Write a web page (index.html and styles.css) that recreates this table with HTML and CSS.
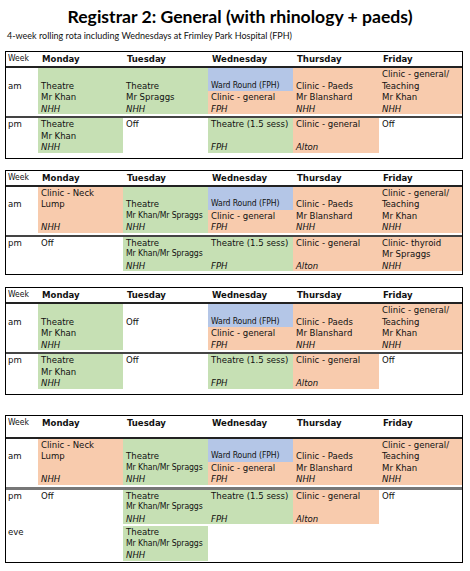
FILE: index.html
```html
<!DOCTYPE html>
<html>
<head>
<meta charset="utf-8">
<link rel="stylesheet" href="styles.css">
</head>
<body>
<h1 class="title">Registrar 2: General (with rhinology + paeds)</h1>
<p class="sub">4-week rolling rota including Wednesdays at Frimley Park Hospital (FPH)</p>

<div class="week w1">
  <div class="row head">
    <div class="c wk">Week</div><div class="c">Monday</div><div class="c">Tuesday</div><div class="c">Wednesday</div><div class="c">Thursday</div><div class="c">Friday</div>
  </div>
  <div class="row am">
    <div class="c"><div class="l"></div><div class="l">am</div></div>
    <div class="c g"><div class="l"></div><div class="l">Theatre</div><div class="l">Mr Khan</div><div class="l i">NHH</div></div>
    <div class="c g"><div class="l"></div><div class="l">Theatre</div><div class="l">Mr Spraggs</div><div class="l i">NHH</div></div>
    <div class="c split"><div class="b"><div class="l"></div><div class="l s">Ward Round (FPH)</div></div><div class="o"><div class="l">Clinic - general</div><div class="l i">FPH</div></div></div>
    <div class="c o"><div class="l"></div><div class="l">Clinic - Paeds</div><div class="l">Mr Blanshard</div><div class="l i">NHH</div></div>
    <div class="c o"><div class="l">Clinic - general/</div><div class="l">Teaching</div><div class="l">Mr Khan</div><div class="l i">NHH</div></div>
  </div>
  <div class="row pm">
    <div class="c"><div class="l">pm</div></div>
    <div class="c g"><div class="l">Theatre</div><div class="l">Mr Khan</div><div class="l i">NHH</div></div>
    <div class="c"><div class="l">Off</div></div>
    <div class="c g"><div class="l">Theatre (1.5 sess)</div><div class="l"></div><div class="l i">FPH</div></div>
    <div class="c o"><div class="l">Clinic - general</div><div class="l"></div><div class="l i">Alton</div></div>
    <div class="c"><div class="l">Off</div></div>
  </div>
</div>

<div class="week w2">
  <div class="row head">
    <div class="c wk">Week</div><div class="c">Monday</div><div class="c">Tuesday</div><div class="c">Wednesday</div><div class="c">Thursday</div><div class="c">Friday</div>
  </div>
  <div class="row am">
    <div class="c"><div class="l"></div><div class="l">am</div></div>
    <div class="c o"><div class="l">Clinic - Neck</div><div class="l">Lump</div><div class="l"></div><div class="l i">NHH</div></div>
    <div class="c g"><div class="l"></div><div class="l">Theatre</div><div class="l s">Mr Khan/Mr Spraggs</div><div class="l i">NHH</div></div>
    <div class="c split"><div class="b"><div class="l"></div><div class="l s">Ward Round (FPH)</div></div><div class="o"><div class="l">Clinic - general</div><div class="l i">FPH</div></div></div>
    <div class="c o"><div class="l"></div><div class="l">Clinic - Paeds</div><div class="l">Mr Blanshard</div><div class="l i">NHH</div></div>
    <div class="c o"><div class="l">Clinic - general/</div><div class="l">Teaching</div><div class="l">Mr Khan</div><div class="l i">NHH</div></div>
  </div>
  <div class="row pm">
    <div class="c"><div class="l">pm</div></div>
    <div class="c"><div class="l">Off</div></div>
    <div class="c g"><div class="l">Theatre</div><div class="l s">Mr Khan/Mr Spraggs</div><div class="l i">NHH</div></div>
    <div class="c g"><div class="l">Theatre (1.5 sess)</div><div class="l"></div><div class="l i">FPH</div></div>
    <div class="c o"><div class="l">Clinic - general</div><div class="l"></div><div class="l i">Alton</div></div>
    <div class="c o"><div class="l">Clinic- thyroid</div><div class="l">Mr Spraggs</div><div class="l i">NHH</div></div>
  </div>
</div>

<div class="week w3">
  <div class="row head">
    <div class="c wk">Week</div><div class="c">Monday</div><div class="c">Tuesday</div><div class="c">Wednesday</div><div class="c">Thursday</div><div class="c">Friday</div>
  </div>
  <div class="row am">
    <div class="c"><div class="l"></div><div class="l">am</div></div>
    <div class="c g"><div class="l"></div><div class="l">Theatre</div><div class="l">Mr Khan</div><div class="l i">NHH</div></div>
    <div class="c"><div class="l"></div><div class="l">Off</div></div>
    <div class="c split"><div class="b"><div class="l"></div><div class="l s">Ward Round (FPH)</div></div><div class="o"><div class="l">Clinic - general</div><div class="l i">FPH</div></div></div>
    <div class="c o"><div class="l"></div><div class="l">Clinic - Paeds</div><div class="l">Mr Blanshard</div><div class="l i">NHH</div></div>
    <div class="c o"><div class="l">Clinic - general/</div><div class="l">Teaching</div><div class="l">Mr Khan</div><div class="l i">NHH</div></div>
  </div>
  <div class="row pm">
    <div class="c"><div class="l">pm</div></div>
    <div class="c g"><div class="l">Theatre</div><div class="l">Mr Khan</div><div class="l i">NHH</div></div>
    <div class="c"><div class="l">Off</div></div>
    <div class="c g"><div class="l">Theatre (1.5 sess)</div><div class="l"></div><div class="l i">FPH</div></div>
    <div class="c o"><div class="l">Clinic - general</div><div class="l"></div><div class="l i">Alton</div></div>
    <div class="c"><div class="l">Off</div></div>
  </div>
</div>

<div class="week w4">
  <div class="row head tall">
    <div class="c wk">Week</div><div class="c">Monday</div><div class="c">Tuesday</div><div class="c">Wednesday</div><div class="c">Thursday</div><div class="c">Friday</div>
  </div>
  <div class="row am">
    <div class="c"><div class="l"></div><div class="l">am</div></div>
    <div class="c o"><div class="l">Clinic - Neck</div><div class="l">Lump</div><div class="l"></div><div class="l i">NHH</div></div>
    <div class="c g"><div class="l"></div><div class="l">Theatre</div><div class="l s">Mr Khan/Mr Spraggs</div><div class="l i">NHH</div></div>
    <div class="c split"><div class="b"><div class="l"></div><div class="l s">Ward Round (FPH)</div></div><div class="o"><div class="l">Clinic - general</div><div class="l i">FPH</div></div></div>
    <div class="c o"><div class="l"></div><div class="l">Clinic - Paeds</div><div class="l">Mr Blanshard</div><div class="l i">NHH</div></div>
    <div class="c o"><div class="l">Clinic - general/</div><div class="l">Teaching</div><div class="l">Mr Khan</div><div class="l i">NHH</div></div>
  </div>
  <div class="row pm gray">
    <div class="c"><div class="l">pm</div></div>
    <div class="c"><div class="l">Off</div></div>
    <div class="c g"><div class="l">Theatre</div><div class="l s">Mr Khan/Mr Spraggs</div><div class="l i">NHH</div></div>
    <div class="c g"><div class="l">Theatre (1.5 sess)</div><div class="l"></div><div class="l i">FPH</div></div>
    <div class="c o"><div class="l">Clinic - general</div><div class="l"></div><div class="l i">Alton</div></div>
    <div class="c"><div class="l">Off</div></div>
  </div>
  <div class="row eve">
    <div class="c"><div class="l">eve</div></div>
    <div class="c"></div>
    <div class="c g"><div class="l">Theatre</div><div class="l s">Mr Khan/Mr Spraggs</div><div class="l i">NHH</div></div>
    <div class="c"></div>
    <div class="c"></div>
    <div class="c"></div>
  </div>
</div>
</body>
</html>
```

FILE: styles.css
```css
html, body {
  margin: 0;
  padding: 0;
  background: #fff;
}
body {
  width: 470px;
  font-family: "DejaVu Sans Condensed", "DejaVu Sans", sans-serif;
  font-stretch: condensed;
  font-size: 9.5px;
  color: #111;
}
.title {
  margin: 0;
  padding: 5px 0 0 10px;
  text-align: center;
  font-family: Lato, "Open Sans", sans-serif;
  font-weight: 700;
  font-size: 17.6px;
  line-height: 23px;
  color: #000;
  font-stretch: normal;
}
.sub {
  margin: 2px 0 0 7px;
  font-family: Lato, "Open Sans", sans-serif;
  font-stretch: normal;
  font-size: 9px;
  line-height: 12px;
  color: #111;
}
.week {
  margin-left: 5px;
  width: 458px;
  box-sizing: border-box;
  border: 1px solid #000;
}
.w1 { margin-top: 9px; }
.w2 { margin-top: 11px; }
.w3 { margin-top: 12px; }
.w4 { margin-top: 20px; }
.row {
  display: grid;
  grid-template-columns: 32px 85px 85px 85px 86px 1fr;
  align-items: start;
}
.head {
  height: 14px;
  border-bottom: 2px solid #222;
  font-weight: 700;
  line-height: 13px;
}
.head .c { padding-left: 4px; }
.head .wk {
  font-weight: 400;
  padding-left: 2px;
  font-size: 8.5px;
}
.head.tall { height: 21px; }
.am {
  padding-bottom: 2px;
  border-bottom: 2px solid #444;
}
.pm { padding-bottom: 5px; }
.w2 .pm { padding-bottom: 3px; }
.pm.gray { border-bottom: 0; padding-bottom: 2px; }
.w4 .am { border-bottom: 3px solid #777; }
.eve { padding-bottom: 1px; }
.c {
  padding-left: 3px;
  min-width: 0;
}
.row .c:first-child { padding-left: 2px; }
.split { padding-left: 0; }
.split .b, .split .o { padding-left: 3px; }
.g { background: #c6e0b4; }
.o { background: #f8cbad; }
.b { background: #b4c6e7; }
.l {
  height: 11.5px;
  line-height: 11.5px;
  white-space: nowrap;
}
.i { font-style: italic; }
.s {
  font-size: 8.6px;
  letter-spacing: -0.1px;
}
```
